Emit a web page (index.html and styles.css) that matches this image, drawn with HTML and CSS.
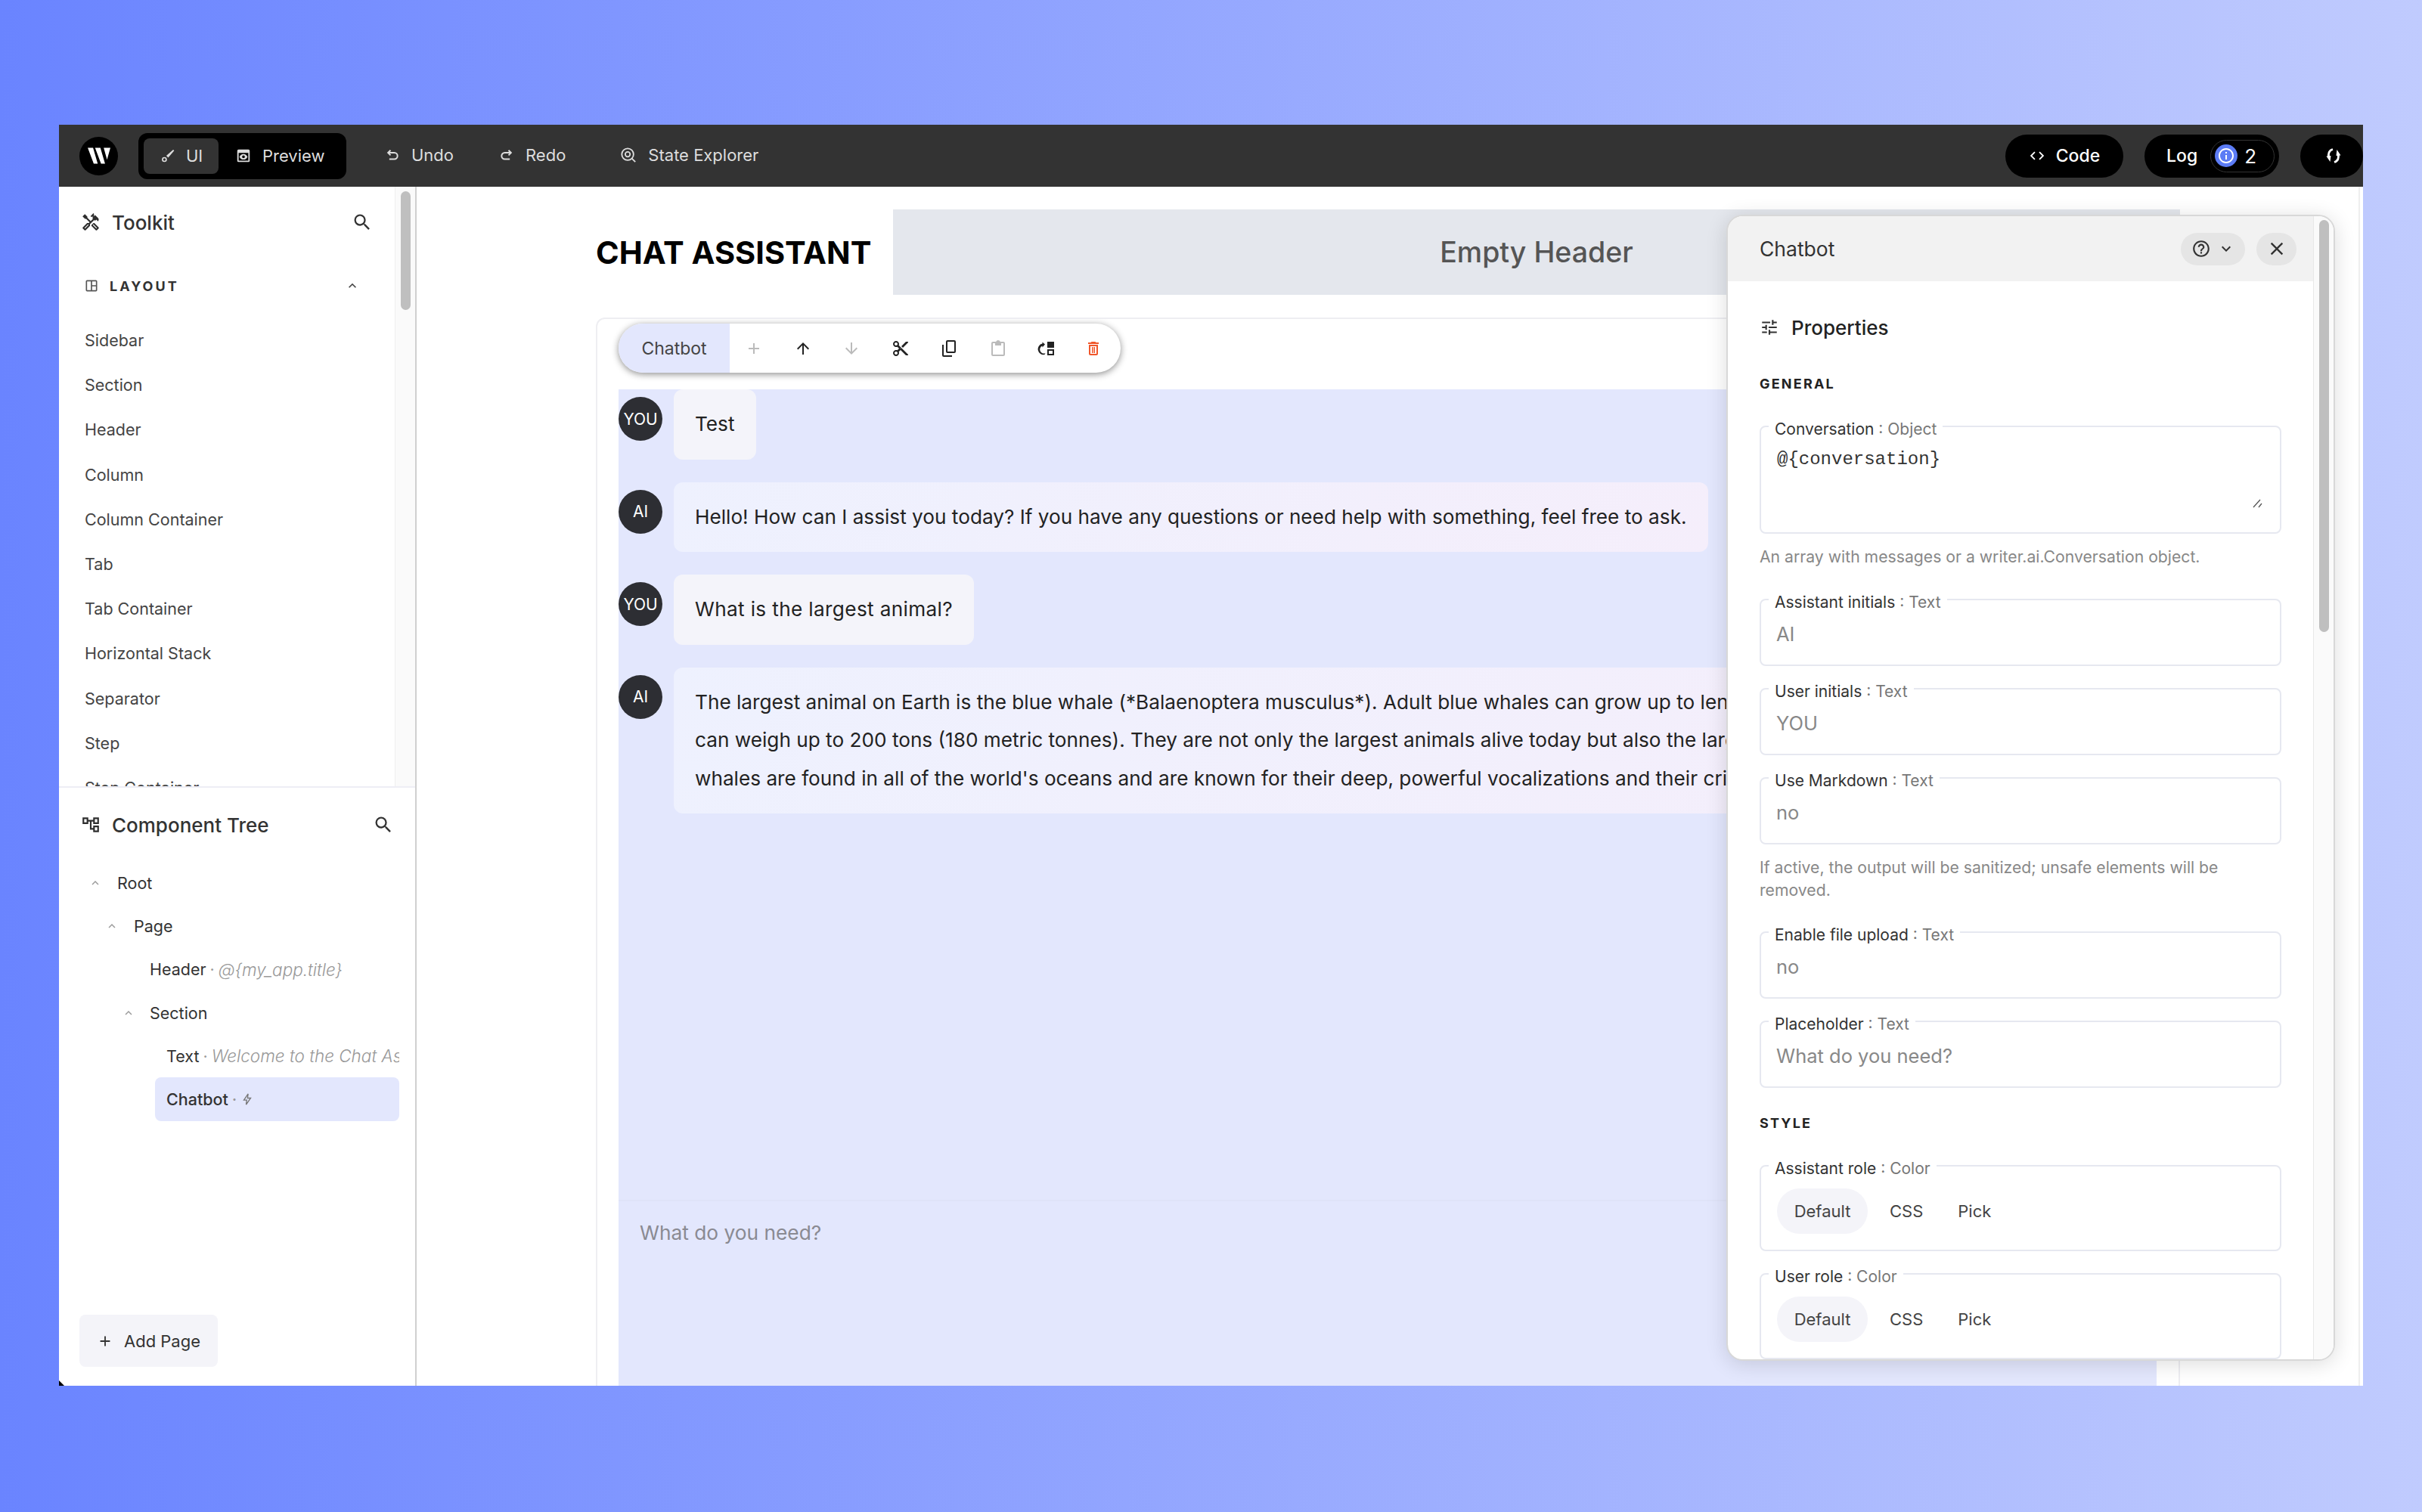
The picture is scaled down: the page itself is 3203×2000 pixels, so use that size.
FILE: index.html
```html
<!DOCTYPE html>
<html lang="en">
<head>
<meta charset="utf-8">
<title>Chat Assistant</title>
<link rel="stylesheet" href="styles.css">
</head>
<body>
<svg class="defs" width="0" height="0" aria-hidden="true">
  <symbol id="i-search" viewBox="0 0 24 24"><path d="M15.5 14h-.79l-.28-.27A6.471 6.471 0 0 0 16 9.5 6.5 6.5 0 1 0 9.5 16c1.61 0 3.09-.59 4.23-1.57l.27.28v.79l5 4.99L20.49 19l-4.99-5zm-6 0C7.01 14 5 11.99 5 9.5S7.01 5 9.5 5 14 7.01 14 9.5 11.99 14 9.5 14z"/></symbol>
  <symbol id="i-up" viewBox="0 0 24 24"><path d="M4 12l1.41 1.41L11 7.83V20h2V7.83l5.58 5.59L20 12l-8-8-8 8z"/></symbol>
  <symbol id="i-down" viewBox="0 0 24 24"><path d="M20 12l-1.41-1.41L13 16.17V4h-2v12.17l-5.58-5.59L4 12l8 8 8-8z"/></symbol>
  <symbol id="i-add" viewBox="0 0 24 24"><path d="M19 13h-6v6h-2v-6H5v-2h6V5h2v6h6v2z"/></symbol>
  <symbol id="i-cut" viewBox="0 0 24 24"><path d="M9.64 7.64c.23-.5.36-1.05.36-1.64 0-2.21-1.79-4-4-4S2 3.79 2 6s1.79 4 4 4c.59 0 1.14-.13 1.64-.36L10 12l-2.36 2.36C7.14 14.13 6.59 14 6 14c-2.21 0-4 1.79-4 4s1.79 4 4 4 4-1.79 4-4c0-.59-.13-1.14-.36-1.64L12 14l7 7h3v-1L9.64 7.64zM6 8c-1.1 0-2-.89-2-2s.9-2 2-2 2 .89 2 2-.9 2-2 2zm0 12c-1.1 0-2-.89-2-2s.9-2 2-2 2 .89 2 2-.9 2-2 2zm6-7.5c-.28 0-.5-.22-.5-.5s.22-.5.5-.5.5.22.5.5-.22.5-.5.5zM19 3l-6 6 2 2 7-7V3z"/></symbol>
  <symbol id="i-copy" viewBox="0 0 24 24"><path d="M5 7v14h11v2H5a2 2 0 0 1-2-2V7h2zm5-6h9a2 2 0 0 1 2 2v13a2 2 0 0 1-2 2h-9a2 2 0 0 1-2-2V3a2 2 0 0 1 2-2zm0 2v13h9V3h-9z" fill-rule="evenodd"/></symbol>
  <symbol id="i-paste" viewBox="0 0 24 24"><path d="M19 3h-4.2C14.4 1.8 13.300 1 12 1s-2.400.8-2.800 2H5a2 2 0 0 0-2 2v15a2 2 0 0 0 2 2h14a2 2 0 0 0 2-2V5a2 2 0 0 0-2-2zm0 17H5V5h3v3h8V5h3v15z"/></symbol>
  <symbol id="i-move" viewBox="0 0 24 24"><path d="M13 3h9v8h-9zM13 13h9v8h-9zM15 15v4h5v-4z" fill-rule="evenodd"/><path d="M10 6.500L6.500 3.500V5.500A7 7 0 0 0 9.500 20l1-1.800A5 5 0 0 1 6.500 8.500v2z"/></symbol>
  <symbol id="i-delete" viewBox="0 0 24 24"><path d="M6 19c0 1.100.9 2 2 2h8c1.100 0 2-.9 2-2V7H6v12zM8 9h8v10H8V9zm7.500-5l-1-1h-5l-1 1H5v2h14V4h-3.500zM10 10h1.500v8H10zM12.500 10H14v8h-1.500z"/></symbol>
  <symbol id="i-close" viewBox="0 0 24 24"><path d="M19 6.410L17.590 5 12 10.590 6.410 5 5 6.410 10.590 12 5 17.590 6.410 19 12 13.410 17.590 19 19 17.590 13.410 12z"/></symbol>
  <symbol id="i-less" viewBox="0 0 24 24"><path d="M12 8l-6 6 1.410 1.410L12 10.830l4.590 4.580L18 14z"/></symbol>
  <symbol id="i-more" viewBox="0 0 24 24"><path d="M16.590 8.590L12 13.170 7.410 8.590 6 10l6 6 6-6z"/></symbol>
  <symbol id="i-undo" viewBox="0 0 24 24"><path d="M9 4.500L5 8.500l4 4M5.500 8.500H15a5 5 0 0 1 0 10H7" fill="none" stroke="currentColor" stroke-width="2.400"/></symbol>
  <symbol id="i-redo" viewBox="0 0 24 24"><path d="M15 4.500l4 4-4 4M18.500 8.500H9a5 5 0 0 0 0 10h8" fill="none" stroke="currentColor" stroke-width="2.400"/></symbol>
  <symbol id="i-tune" viewBox="0 0 24 24"><path d="M3 17v2h6v-2H3zM3 5v2h10V5H3zm10 16v-2h8v-2h-8v-2h-2v6h2zM7 9v2H3v2h4v2h2V9H7zm14 4v-2H11v2h10zm-6-4h2V7h4V5h-4V3h-2v6z"/></symbol>
  <symbol id="i-help" viewBox="0 0 24 24"><path d="M11 18h2v-2h-2v2zm1-16C6.480 2 2 6.480 2 12s4.480 10 10 10 10-4.480 10-10S17.520 2 12 2zm0 18c-4.410 0-8-3.590-8-8s3.590-8 8-8 8 3.590 8 8-3.590 8-8 8zm0-14c-2.210 0-4 1.790-4 4h2c0-1.100.9-2 2-2s2 .9 2 2c0 2-3 1.750-3 5h2c0-2.250 3-2.500 3-5 0-2.210-1.790-4-4-4z"/></symbol>
  <symbol id="i-code" viewBox="0 0 24 24"><path d="M9.400 16.600L4.800 12l4.600-4.600L8 6l-6 6 6 6 1.400-1.400zm5.200 0l4.600-4.600-4.600-4.600L16 6l6 6-6 6-1.400-1.400z"/></symbol>
  <symbol id="i-info" viewBox="0 0 24 24"><path d="M11 7h2v2h-2zm0 4h2v6h-2zm1-9C6.480 2 2 6.480 2 12s4.480 10 10 10 10-4.480 10-10S17.520 2 12 2zm0 18c-4.410 0-8-3.590-8-8s3.590-8 8-8 8 3.590 8 8-3.590 8-8 8z"/></symbol>
  <symbol id="i-sync" viewBox="0 0 24 24"><path d="M11 3.500C6 5 4.500 9.500 6 14M13 20.500C18 19 19.500 14.500 18 10" fill="none" stroke="currentColor" stroke-width="2.800"/><path d="M2.500 12.500L8.500 12 7.500 20zM21.500 11.500L15.500 12 16.500 4z"/></symbol>
  <symbol id="i-bolt" viewBox="0 0 24 24"><path d="M13.500 2.500L6 13.500h5l-1 8 8-11.500h-5.500z" fill="none" stroke="currentColor" stroke-width="1.800"/></symbol>
  <symbol id="i-tools" viewBox="0 0 24 24"><path d="M21.670 18.170l-5.300-5.300h-.99l-2.540 2.540v.99l5.300 5.300c.39.39 1.020.39 1.410 0l2.120-2.120c.39-.38.39-1.020 0-1.410zm-2.830 1.420l-4.240-4.240.71-.71 4.240 4.240-.71.71zM17.340 10.190l1.410-1.410 2.120 2.120c1.170-1.170 1.170-3.070 0-4.240l-3.540-3.540-1.410 1.410V1.710l-.7-.71-3.540 3.540.71.71h2.830l-1.410 1.410 1.060 1.060-2.890 2.890-4.130-4.130V5.060L4.830 2.040 2 4.870 5.030 7.900h1.410l4.130 4.130-.85.85H7.600l-5.300 5.300c-.39.39-.39 1.020 0 1.410l2.120 2.120c.39.39 1.020.39 1.410 0l5.300-5.300v-2.120l5.150-5.150 1.060 1.050zm-7.980 5.150l-4.240 4.240-.71-.71 4.240-4.240.71.71z"/></symbol>
  <symbol id="i-tree" viewBox="0 0 24 24"><path d="M22 11V3h-7v3H9V3H2v8h7V8h2v10h4v3h7v-8h-7v3h-2V8h2v3h7zM7 9H4V5h3v4zm10 6h3v4h-3v-4zm0-10h3v4h-3V5z"/></symbol>
  <symbol id="i-layout" viewBox="0 0 24 24"><path d="M5 3h14a2 2 0 0 1 2 2v14a2 2 0 0 1-2 2H5a2 2 0 0 1-2-2V5a2 2 0 0 1 2-2zm0 2v14h6V5H5zm8 0v6h6V5h-6zm0 8v6h6v-6h-6z" fill-rule="evenodd"/></symbol>
  <symbol id="i-brush" viewBox="0 0 24 24"><path d="M20.500 2.500l1.500 1.500-9.500 11-3-3z"/><circle cx="6.500" cy="18" r="3" fill="none" stroke="currentColor" stroke-width="2"/></symbol>
  <symbol id="i-preview" viewBox="0 0 24 24"><path d="M5 3h14a2 2 0 0 1 2 2v14a2 2 0 0 1-2 2H5a2 2 0 0 1-2-2V5a2 2 0 0 1 2-2zm0 5v11h14V8H5zm7 1.500c2.700 0 4.800 1.500 5.800 4-1 2.500-3.100 4-5.800 4s-4.800-1.500-5.800-4c1-2.500 3.100-4 5.800-4zm0 2a2 2 0 1 0 0 4 2 2 0 0 0 0-4z" fill-rule="evenodd"/></symbol>
  <symbol id="i-state" viewBox="0 0 24 24"><circle cx="11" cy="11" r="8.500" fill="none" stroke="currentColor" stroke-width="2"/><circle cx="11" cy="11" r="3.500" fill="none" stroke="currentColor" stroke-width="2"/><path d="M17 17l5 5" fill="none" stroke="currentColor" stroke-width="2"/></symbol>
</svg>

<div class="window">
  <header class="topbar">
    <span class="logo">
      <svg viewBox="0 0 50 50" class="logo-mark"><path d="M8 13h8l7 24h-6zM19 13h8l7 24h-6zM32 13h10l-5 18z"/></svg>
    </span>
    <div class="mode-switch">
      <span class="mode mode-active"><svg class="ico ico-s"><use href="#i-brush"/></svg>UI</span>
      <span class="mode"><svg class="ico ico-s ico-wide"><use href="#i-preview"/></svg>Preview</span>
    </div>
    <div class="history">
      <span class="bar-item"><svg class="ico ico-s"><use href="#i-undo"/></svg>Undo</span>
      <span class="bar-item"><svg class="ico ico-s"><use href="#i-redo"/></svg>Redo</span>
      <span class="bar-item bar-item-far"><svg class="ico ico-m"><use href="#i-state"/></svg>State Explorer</span>
    </div>
    <div class="bar-right">
      <span class="pill pill-code"><svg class="ico ico-m"><use href="#i-code"/></svg>Code</span>
      <span class="pill pill-log">Log
        <span class="log-count"><span class="log-dot"><svg class="ico ico-dot"><use href="#i-info"/></svg></span><span class="log-num">2</span></span>
      </span>
      <span class="pill pill-sync"><svg class="ico ico-sync"><use href="#i-sync"/></svg></span>
    </div>
  </header>

  <div class="main">
    <aside class="side">
      <section class="toolkit">
        <div class="toolkit-body">
          <div class="panel-title title-toolkit">
            <svg class="ico ico-title"><use href="#i-tools"/></svg>
            <span class="panel-name">Toolkit</span>
            <svg class="ico ico-search"><use href="#i-search"/></svg>
          </div>
          <div class="group-head">
            <svg class="ico ico-group"><use href="#i-layout"/></svg>
            <span class="group-name">LAYOUT</span>
            <svg class="ico ico-chev"><use href="#i-less"/></svg>
          </div>
          <ul class="tool-list">
            <li>Sidebar</li><li>Section</li><li>Header</li><li>Column</li><li>Column Container</li><li>Tab</li><li>Tab Container</li><li>Horizontal Stack</li><li>Separator</li><li>Step</li><li>Step Container</li>
          </ul>
        </div>
        <div class="track"><div class="thumb"></div></div>
      </section>
      <section class="tree">
        <div class="panel-title title-tree">
          <svg class="ico ico-title"><use href="#i-tree"/></svg>
          <span class="panel-name">Component Tree</span>
          <svg class="ico ico-search"><use href="#i-search"/></svg>
        </div>
        <div class="tree-row lvl-0"><svg class="ico ico-fold"><use href="#i-less"/></svg>Root</div>
        <div class="tree-row lvl-1"><svg class="ico ico-fold"><use href="#i-less"/></svg>Page</div>
        <div class="tree-row lvl-2">Header<span class="dot">·</span><em>@{my_app.title}</em></div>
        <div class="tree-row lvl-2b"><svg class="ico ico-fold"><use href="#i-less"/></svg>Section</div>
        <div class="tree-row lvl-3">Text<span class="dot">·</span><em>Welcome to the Chat Assistant</em></div>
        <div class="tree-row lvl-3 selected">Chatbot<span class="dot">·</span><svg class="ico ico-bolt"><use href="#i-bolt"/></svg></div>
        <button class="add-page"><svg class="ico ico-plus"><use href="#i-add"/></svg>Add Page</button>
      </section>
    </aside>

    <main class="canvas">
      <div class="page-head">
        <h1 class="app-title">CHAT ASSISTANT</h1>
        <div class="empty-header">Empty Header</div>
      </div>
      <div class="chat-card">
        <div class="toolbar">
          <span class="toolbar-name">Chatbot</span>
          <span class="tb-btn tb-off"><svg class="ico ico-tb"><use href="#i-add"/></svg></span>
          <span class="tb-btn"><svg class="ico ico-tb"><use href="#i-up"/></svg></span>
          <span class="tb-btn tb-off"><svg class="ico ico-tb"><use href="#i-down"/></svg></span>
          <span class="tb-btn"><svg class="ico ico-tb"><use href="#i-cut"/></svg></span>
          <span class="tb-btn"><svg class="ico ico-tb"><use href="#i-copy"/></svg></span>
          <span class="tb-btn tb-off"><svg class="ico ico-tb"><use href="#i-paste"/></svg></span>
          <span class="tb-btn"><svg class="ico ico-tb"><use href="#i-move"/></svg></span>
          <span class="tb-btn tb-del"><svg class="ico ico-tb"><use href="#i-delete"/></svg></span>
        </div>
        <div class="chatbot">
          <div class="messages">
            <div class="msg"><span class="avatar">YOU</span><div class="bubble">Test</div></div>
            <div class="msg"><span class="avatar">AI</span><div class="bubble bubble-ai">Hello! How can I assist you today? If you have any questions or need help with something, feel free to ask.</div></div>
            <div class="msg"><span class="avatar">YOU</span><div class="bubble bubble-loose">What is the largest animal?</div></div>
            <div class="msg"><span class="avatar">AI</span><div class="bubble bubble-ai">The largest animal on Earth is the blue whale (*Balaenoptera musculus*). Adult blue whales can grow up to lengths of up to 100 feet and<br>can weigh up to 200 tons (180 metric tonnes). They are not only the largest animals alive today but also the largest known to have existed.<br>whales are found in all of the world's oceans and are known for their deep, powerful vocalizations and their critical role in the ecosystem.</div></div>
          </div>
          <div class="chat-input">What do you need?</div>
        </div>
      </div>

      <aside class="settings">
        <div class="settings-main">
          <div class="settings-head">
            <span class="settings-name">Chatbot</span>
            <span class="help-btn"><svg class="ico ico-help"><use href="#i-help"/></svg><svg class="ico ico-help-chev"><use href="#i-more"/></svg></span>
            <span class="close-btn"><svg class="ico ico-close"><use href="#i-close"/></svg></span>
          </div>
          <div class="settings-body">
            <div class="props-title"><svg class="ico ico-tune"><use href="#i-tune"/></svg>Properties</div>
            <div class="section-label">GENERAL</div>
            <fieldset class="field field-first field-area">
              <legend>Conversation <span class="type">: Object</span></legend>
              <div class="code-value">@{conversation}</div>
              <svg class="resize" viewBox="0 0 14 12"><path d="M1 11L10 1M8 11l4-5" fill="none" stroke="#555" stroke-width="1.300"/></svg>
            </fieldset>
            <p class="help-text help-a">An array with messages or a writer.ai.Conversation object.</p>
            <fieldset class="field field-after-help"><legend>Assistant initials <span class="type">: Text</span></legend><div class="value">AI</div></fieldset>
            <fieldset class="field"><legend>User initials <span class="type">: Text</span></legend><div class="value">YOU</div></fieldset>
            <fieldset class="field"><legend>Use Markdown <span class="type">: Text</span></legend><div class="value">no</div></fieldset>
            <p class="help-text help-a">If active, the output will be sanitized; unsafe elements will be removed.</p>
            <fieldset class="field field-after-help2"><legend>Enable file upload <span class="type">: Text</span></legend><div class="value">no</div></fieldset>
            <fieldset class="field"><legend>Placeholder <span class="type">: Text</span></legend><div class="value">What do you need?</div></fieldset>
            <div class="section-label section-style">STYLE</div>
            <fieldset class="field field-first field-color">
              <legend>Assistant role <span class="type">: Color</span></legend>
              <div class="choices"><span class="choice choice-on">Default</span><span class="choice">CSS</span><span class="choice">Pick</span></div>
            </fieldset>
            <fieldset class="field field-color">
              <legend>User role <span class="type">: Color</span></legend>
              <div class="choices"><span class="choice choice-on">Default</span><span class="choice">CSS</span><span class="choice">Pick</span></div>
            </fieldset>
          </div>
        </div>
        <div class="settings-track"><div class="settings-thumb"></div></div>
      </aside>
    </main>
  </div>
  <svg class="corner" viewBox="0 0 7 7"><path d="M0 0l7 7H0z"/></svg>
</div>
</body>
</html>
```
FILE: styles.css
```css
* { box-sizing: border-box; }
html, body { margin: 0; height: 100%; }
body {
  width: 3203px;
  height: 2000px;
  padding: 165px 78px 167px;
  overflow: hidden;
  background: linear-gradient(90deg, #6a84ff 0%, #c0cbfe 100%);
  font-family: "Inter", "Liberation Sans", sans-serif;
  color: #333;
}
.defs { position: absolute; }
.ico { display: block; flex: none; fill: currentColor; }

.window {
  position: relative;
  width: 3047px;
  height: 1668px;
  display: flex;
  flex-direction: column;
  background: #fff;
  overflow: hidden;
}
.corner { position: absolute; left: 0; bottom: 0; width: 7px; height: 7px; fill: #000; }

/* top bar */
.topbar {
  flex: none;
  height: 82px;
  display: flex;
  align-items: center;
  padding-left: 27px;
  background: #333;
  color: #ddd;
  font-size: 22px;
}
.logo {
  width: 51px; height: 51px;
  display: flex; align-items: center; justify-content: center;
  border-radius: 50%;
  background: #000;
  margin-right: 27px;
}
.logo-mark { width: 44px; height: 44px; fill: #fff; }
.mode-switch {
  width: 275px; height: 61px;
  display: flex; align-items: center;
  padding: 7px;
  background: #000;
  border-radius: 12px;
}
.mode { display: flex; align-items: center; gap: 14px; height: 47px; padding: 0 22px 1px; border-radius: 8px; }
.mode-active { width: 99px; padding-left: 22px; background: #333; }
.ico-s { width: 20px; height: 20px; }
.ico-wide { width: 22px; height: 22px; }
.ico-m { width: 22px; height: 22px; }
.history { display: flex; align-items: center; gap: 60px; margin: 0 0 2px 51px; }
.bar-item { display: flex; align-items: center; gap: 15px; }
.bar-item-far { margin-left: 12px; }
.bar-right { margin-left: auto; display: flex; align-items: center; gap: 28px; }
.pill {
  height: 57px;
  display: flex; align-items: center; justify-content: center;
  border-radius: 29px;
  background: #000;
  color: #fff;
  font-size: 23px;
  font-weight: 500;
}
.pill-code { width: 156px; gap: 14px; }
.pill-log { width: 178px; justify-content: flex-start; padding-left: 29px; }
.log-count {
  width: 85px; height: 43px;
  margin-left: 17px;
  display: flex; align-items: center;
  padding-left: 5px;
  border: 1px solid #333;
  border-radius: 22px;
}
.log-dot { width: 30px; height: 30px; display: flex; align-items: center; justify-content: center; border-radius: 50%; background: #5c7cf5; }
.ico-dot { width: 24px; height: 24px; }
.log-num { margin-left: 9px; font-weight: 400; font-size: 26px; }
.pill-sync { width: 83px; padding-left: 4px; }
.ico-sync { width: 24px; height: 24px; }

/* main */
.main { flex: 1; min-height: 0; display: flex; }

/* side */
.side {
  flex: none;
  width: 473px;
  display: flex;
  flex-direction: column;
  border-right: 2px solid #d0d0d0;
}
.toolkit { flex: none; height: 795px; display: flex; border-bottom: 2px solid #eeeef5; overflow: hidden; }
.toolkit-body { flex: 1; min-width: 0; }
.track { flex: none; width: 27px; padding: 6px 6px 0 7px; background: #fafafa; border-left: 1px solid #eee; }
.thumb { height: 157px; border-radius: 8px; background: #bfbfbf; }
.panel-title { display: flex; align-items: center; padding-left: 29px; height: 46px; }
.title-toolkit { margin-top: 24px; }
.title-tree { margin-top: 26px; }
.ico-title { width: 26px; height: 26px; color: #2e2e2e; }
.panel-name { margin-left: 15px; font-size: 26px; font-weight: 500; color: #333; }
.ico-search { width: 28px; height: 28px; color: #333; margin-left: auto; }
.title-toolkit .ico-search { margin-right: 29px; }
.title-tree .ico-search { margin-right: 28px; }
.group-head { display: flex; align-items: center; height: 28px; margin-top: 47px; padding-left: 33px; }
.ico-group { width: 20px; height: 20px; color: #555; }
.group-name { margin-left: 14px; font-size: 18px; font-weight: 700; letter-spacing: 3px; color: #333; }
.ico-chev { width: 20px; height: 20px; color: #444; margin-left: 219px; }
.tool-list { list-style: none; margin: 29px 0 0; padding: 0 0 0 34px; font-size: 21.500px; color: #444; }
.tool-list li { height: 59.200px; line-height: 59.200px; white-space: nowrap; }

.tree { flex: 1; min-height: 0; display: flex; flex-direction: column; }
.tree-row {
  flex: none;
  display: flex; align-items: center;
  height: 57.300px;
  margin-right: 21px;
  font-size: 21.500px;
  color: #333;
  white-space: nowrap;
  overflow: hidden;
}
.tree-row em { color: #999; font-weight: 300; font-size: 22.500px; }
.dot { margin: 0 5px; color: #999; }
.lvl-0 { padding-left: 39px; margin-top: 25px; }
.lvl-1 { padding-left: 61px; }
.lvl-2 { padding-left: 120px; }
.lvl-2b { padding-left: 83px; }
.lvl-2b .ico-fold { margin-right: 19px; }
.lvl-3 { padding-left: 142px; }
.selected { margin-left: 127px; padding-left: 15px; border-radius: 8px; background: #e3e7fd; font-weight: 500; }
.ico-fold { width: 18px; height: 18px; color: #999; margin-right: 20px; }
.ico-bolt { width: 18px; height: 18px; color: #777; margin-left: 0; }
.add-page {
  flex: none;
  margin: auto 0 25px 27px;
  width: 183px; height: 69px;
  display: flex; align-items: center; gap: 14px;
  padding: 0 0 0 23px;
  border: none;
  border-radius: 8px;
  background: #f4f4f9;
  font: inherit;
  font-size: 22px;
  color: #333;
}
.ico-plus { width: 22px; height: 22px; }

/* canvas */
.canvas {
  position: relative;
  flex: 1;
  min-width: 0;
  display: flex;
  flex-direction: column;
  padding: 30px 236px 0 237px;
  border-right: 2px solid #eeeeee;
  margin-right: 4px;
}
.page-head { flex: none; display: flex; align-items: center; height: 113px; }
.app-title { margin: 0; width: 393px; flex: none; font-size: 41.500px; font-weight: 700; color: #000; white-space: nowrap; }
.empty-header {
  flex: 1; height: 113px;
  display: flex; align-items: center; justify-content: center;
  background: #e4e7ed;
  font-size: 37.500px;
  font-weight: 500;
  color: #555;
}
.chat-card {
  position: relative;
  flex: 1;
  min-height: 0;
  display: flex;
  margin-top: 30px;
  padding: 93px 29px 0 28px;
  border: 2px solid #eeeef2;
  border-bottom: none;
  border-radius: 12px 12px 0 0;
  overflow: hidden;
}
.toolbar {
  position: absolute;
  left: 28px; top: 6px;
  width: 664px; height: 65px;
  display: flex; align-items: center;
  padding-right: 20px;
  border-radius: 33px;
  background: #fff;
  box-shadow: 0 2px 10px rgba(0,0,0,.45);
  overflow: hidden;
  z-index: 1;
}
.toolbar-name {
  flex: none;
  width: 147px; height: 65px;
  display: flex; align-items: center; justify-content: center;
  background: #e3e7fd;
  font-size: 23px;
  color: #444;
}
.tb-btn { flex: none; width: 64.500px; display: flex; justify-content: center; color: #222; }
.tb-off { color: #bbb; }
.tb-del { color: #f0572b; margin-left: -3px; }
.ico-tb { width: 24px; height: 24px; }
.chatbot { flex: 1; min-width: 0; display: flex; flex-direction: column; background: #e3e7fd; }
.messages { flex: none; height: 1072px; display: flex; flex-direction: column; align-items: flex-start; gap: 30px; overflow: hidden; }
.msg { flex: none; display: flex; gap: 15px; }
.avatar {
  flex: none;
  width: 58px; height: 58px;
  margin-top: 10px;
  display: flex; align-items: center; justify-content: center;
  border-radius: 50%;
  background: #2d2e33;
  color: #fff;
  font-size: 21px;
}
.bubble {
  padding: 21px 28px;
  border-radius: 12px;
  background: #f4f4fa;
  font-size: 26.200px;
  line-height: 50.500px;
  color: #222;
  white-space: nowrap;
}
.bubble-loose { letter-spacing: .35px; }
.bubble-ai { background: linear-gradient(100deg, #eef1fe, #f5eefb); }
.chat-input { flex: 1; padding: 22px 28px; border-top: 2px solid #dfe3f8; font-size: 26.300px; line-height: 40px; color: #8a8a92; }

/* settings */
.settings {
  position: absolute;
  left: 1732px; top: 37px;
  width: 805px; height: 1516px;
  display: flex;
  border: 2px solid #d8d8d8;
  border-radius: 22px;
  background: #fff;
  box-shadow: 0 4px 28px rgba(0,0,0,.14);
  overflow: hidden;
  z-index: 2;
}
.settings-main { flex: 1; min-width: 0; overflow: hidden; }
.settings-head { height: 86px; display: flex; align-items: center; padding: 0 22px 0 42px; background: #f2f2f2; }
.settings-name { margin-right: auto; font-size: 26.500px; color: #333; }
.help-btn { width: 85px; height: 43px; display: flex; align-items: center; padding-left: 14px; gap: 8px; border-radius: 22px; background: #e5e5e5; color: #333; }
.ico-help { width: 26px; height: 26px; }
.ico-help-chev { width: 24px; height: 24px; }
.close-btn { width: 53px; height: 43px; margin-left: 15px; display: flex; align-items: center; justify-content: center; border-radius: 22px; background: #e5e5e5; color: #333; }
.ico-close { width: 28px; height: 28px; }
.settings-body { padding: 45px 43px 0 42px; }
.props-title { display: flex; align-items: center; height: 32px; gap: 16px; font-size: 26px; font-weight: 500; color: #222; }
.ico-tune { width: 26px; height: 26px; color: #333; }
.section-label { margin-top: 47px; height: 24px; line-height: 24px; font-size: 18px; font-weight: 700; letter-spacing: 2.200px; color: #222; }
.section-style { margin-top: 35px; }
.field {
  display: block;
  position: relative;
  min-width: 0;
  width: 690px;
  height: 105px;
  margin: 13px 0 0;
  padding: 0 20px;
  border: 2px solid #e6e8f0;
  border-radius: 8px;
}
legend { margin-left: -10px; padding: 8px 8px 0; font-size: 21px; line-height: 26px; color: #333; white-space: nowrap; }
.type { color: #777; }
.field-first { margin-top: 27px; }
.field-area { height: 159px; }
.field-after-help { margin-top: 25px; }
.field-after-help2 { margin-top: 24px; }
.field-color { height: 130px; }
.value { padding-top: 14px; font-size: 25.500px; line-height: 30px; color: #888; }
.code-value { padding: 12px 0 0 1px; font-family: "Liberation Mono", monospace; font-size: 24px; line-height: 30px; color: #333; }
.resize { position: absolute; right: 22px; bottom: 32px; width: 14px; height: 12px; }
.help-text { margin: 13px 0 0; width: 690px; font-size: 21.200px; line-height: 30px; color: #888; }
.help-a { margin-top: 15px; }
.choices { display: flex; align-items: center; padding-top: 13px; margin-left: 1px; }
.choice { height: 60px; display: flex; align-items: center; font-size: 22px; color: #444; }
.choice-on { width: 120px; justify-content: center; margin-right: 29px; border-radius: 30px; background: #f4f4f9; }
.choice:nth-child(2) { margin-right: 46px; }
.settings-track { flex: none; width: 27px; padding: 5px 6px 0 7px; background: #fafafa; border-left: 1px solid #e8e8e8; }
.settings-thumb { height: 545px; border-radius: 8px; background: #bfbfbf; }
```
